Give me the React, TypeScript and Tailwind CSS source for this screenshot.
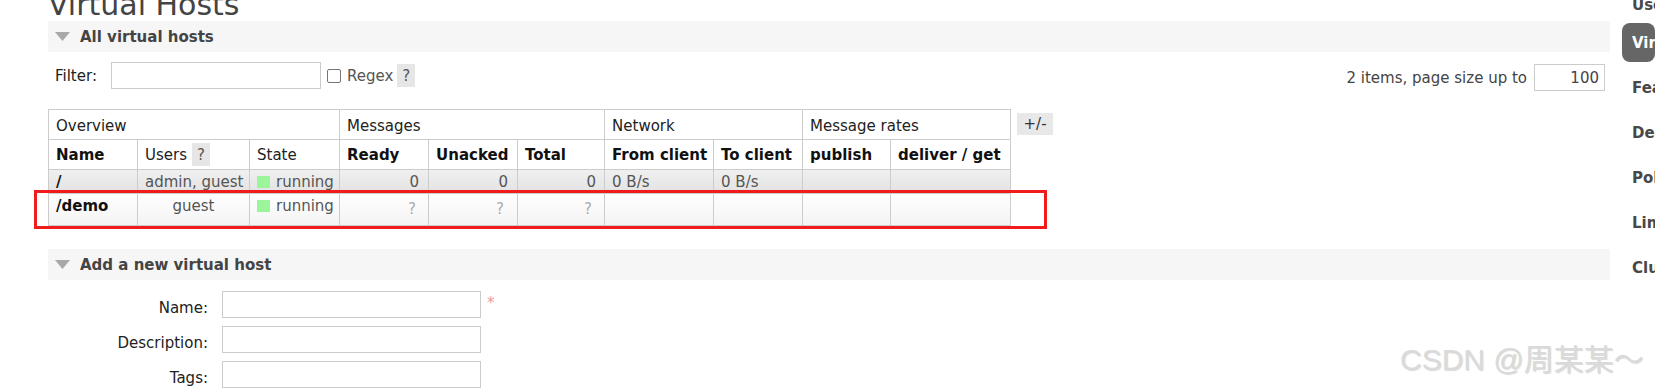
import React from "react";

const td = "border border-[#ccc] px-[7px] align-top";

function SectionHeader({ title }: { title: string }) {
  return (
    <div className="flex h-[31px] items-center bg-[#f6f6f6]">
      <svg width="15" height="9" viewBox="0 0 15 9" className="ml-[7px] mr-[10px]">
        <path d="M0 0H15L7.5 9Z" fill="#a8a8a8" />
      </svg>
      <span className="font-bold text-[#444]">{title}</span>
    </div>
  );
}

function Help() {
  return (
    <span className="inline-flex h-[23px] w-[18px] shrink-0 items-center justify-center bg-[#e6e6e6] text-[#555]">
      ?
    </span>
  );
}

function Running() {
  return (
    <div className="flex items-center">
      <span className="mr-[6px] h-[12px] w-[13px] shrink-0 bg-[#9bf59b]" />
      <span>running</span>
    </div>
  );
}

function FormRow({ label, required }: { label: string; required?: boolean }) {
  return (
    <div className="flex h-[27px] items-start">
      <span className="w-[160px] pt-[8px] text-right text-[#222]">{label}</span>
      <input className="ml-[14px] h-[27px] w-[259px] border border-[#ccc] bg-white" />
      {required && <span className="ml-[6px] pt-[3px] text-[#f29b9b]">*</span>}
    </div>
  );
}

export default function App() {
  const cols = [89, 112, 90, 89, 89, 87, 109, 89, 88, 120];
  const sideNav = ["Feature Flags", "Deprecated Features", "Policies", "Limits", "Cluster"];

  return (
    <div className="relative flex h-[390px] w-[1655px] overflow-hidden bg-white font-['DejaVu_Sans',sans-serif] text-[15px] leading-[18px] text-[#444]">
      <main className="ml-[48px] w-[1562px] shrink-0">
        <h1 className="-mt-[10px] h-[31px] text-[30px] leading-[30px] font-normal text-[#444]">
          Virtual Hosts
        </h1>

        <SectionHeader title="All virtual hosts" />

        {/* Filter + paging */}
        <div className="mt-[10px] flex h-[29px] justify-between">
          <div className="flex h-[27px] items-center self-start">
            <span className="ml-[7px] text-[#222]">Filter:</span>
            <input className="ml-[14px] h-[27px] w-[210px] border border-[#ccc] bg-white" />
            <span className="ml-[6px] h-[14px] w-[14px] rounded-[2px] border border-[#767676] bg-white" />
            <span className="ml-[6px] text-[#555]">Regex</span>
            <span className="ml-[4px]">
              <Help />
            </span>
          </div>
          <div className="flex h-[27px] items-center self-end">
            <span className="text-[#444]">2 items, page size up to</span>
            <input
              defaultValue="100"
              className="ml-[7px] mr-[5px] h-[27px] w-[71px] border border-[#ccc] bg-white pr-[5px] text-right text-[#444]"
            />
          </div>
        </div>

        {/* Vhost table */}
        <div className="mt-[18px] flex items-start">
          <table className="w-[962px] table-fixed border-collapse whitespace-nowrap">
            <colgroup>
              {cols.map((w, i) => (
                <col key={i} style={{ width: w }} />
              ))}
            </colgroup>
            <thead>
              <tr className="h-[30px] text-[#222]">
                <th colSpan={3} className={`${td} pt-[7px] text-left font-normal`}>Overview</th>
                <th colSpan={3} className={`${td} pt-[7px] text-left font-normal`}>Messages</th>
                <th colSpan={2} className={`${td} pt-[7px] text-left font-normal`}>Network</th>
                <th colSpan={2} className={`${td} pt-[7px] text-left font-normal`}>Message rates</th>
              </tr>
              <tr className="h-[30px] text-[#111]">
                <th className="border border-[#ccc] px-[7px] text-left align-middle font-bold">Name</th>
                <th className="border border-[#ccc] px-[7px] text-left align-middle font-normal text-[#222]">
                  <div className="flex items-center">
                    <span>Users</span>
                    <span className="ml-[5px]">
                      <Help />
                    </span>
                  </div>
                </th>
                <th className="border border-[#ccc] px-[7px] text-left align-middle font-normal text-[#222]">State</th>
                <th className="border border-[#ccc] px-[7px] text-left align-middle font-bold">Ready</th>
                <th className="border border-[#ccc] px-[7px] text-left align-middle font-bold">Unacked</th>
                <th className="border border-[#ccc] px-[7px] text-left align-middle font-bold">Total</th>
                <th className="border border-[#ccc] px-[7px] text-left align-middle font-bold">From client</th>
                <th className="border border-[#ccc] px-[7px] text-left align-middle font-bold">To client</th>
                <th className="border border-[#ccc] px-[7px] text-left align-middle font-bold">publish</th>
                <th className="border border-[#ccc] px-[7px] text-left align-middle font-bold">deliver / get</th>
              </tr>
            </thead>
            <tbody className="text-[#555]">
              <tr className="h-[24px] bg-[linear-gradient(#f0f0f0,#e2e2e2)]">
                <td className={`${td} pt-[3px] font-bold text-[#111]`}>/</td>
                <td className={`${td} pt-[3px] text-center`}>admin, guest</td>
                <td className={`${td} pt-[3px]`}>
                  <Running />
                </td>
                <td className={`${td} pr-[9px] pt-[3px] text-right`}>0</td>
                <td className={`${td} pr-[9px] pt-[3px] text-right`}>0</td>
                <td className={`${td} pr-[8px] pt-[3px] text-right`}>0</td>
                <td className={`${td} pt-[3px]`}>0 B/s</td>
                <td className={`${td} pt-[3px]`}>0 B/s</td>
                <td className={td} />
                <td className={td} />
              </tr>
              <tr className="h-[32px] bg-[linear-gradient(#ffffff,#f3f3f3)]">
                <td className={`${td} pt-[3px] font-bold text-[#111]`}>/demo</td>
                <td className={`${td} pt-[3px] text-center`}>guest</td>
                <td className={`${td} pt-[3px]`}>
                  <Running />
                </td>
                <td className={`${td} pr-[12px] pt-[6px] text-right text-[#aaa]`}>?</td>
                <td className={`${td} pr-[13px] pt-[6px] text-right text-[#aaa]`}>?</td>
                <td className={`${td} pr-[12px] pt-[6px] text-right text-[#aaa]`}>?</td>
                <td className={td} />
                <td className={td} />
                <td className={td} />
                <td className={td} />
              </tr>
            </tbody>
          </table>
          <span className="ml-[6px] mt-[4px] flex h-[22px] w-[36px] items-center justify-center bg-[#e8e8e8] text-[#333]">
            +/-
          </span>
        </div>

        <div className="mt-[23px]">
          <SectionHeader title="Add a new virtual host" />
        </div>

        <div className="mt-[11px] flex flex-col gap-[8px]">
          <FormRow label="Name:" required />
          <FormRow label="Description:" />
          <FormRow label="Tags:" />
        </div>
      </main>

      {/* Right-hand tab list */}
      <aside className="ml-[12px] flex-1 overflow-hidden whitespace-nowrap font-bold text-[#484848]">
        <div className="-mt-[4px] pl-[10px]">Users</div>
        <div className="mt-[9px] rounded-[8px] bg-[#666] pb-[10px] pl-[10px] pt-[11px] text-white">
          Virtual Hosts
        </div>
        {sideNav.map((label, i) => (
          <div key={label} className={`${i === 0 ? "mt-[17px]" : "mt-[27px]"} pl-[10px]`}>
            {label}
          </div>
        ))}
      </aside>

      {/* Highlight box drawn over the /demo row */}
      <div className="pointer-events-none absolute left-[34px] top-[190px] h-[39px] w-[1013px] border-[3px] border-[#f21b1b]" />

      {/* Watermark */}
      <div className="pointer-events-none absolute left-[1400px] top-[345px] whitespace-nowrap font-['Liberation_Sans','Noto_Sans_CJK_SC',sans-serif] text-[30px] leading-[30px] text-[#dadada] [text-shadow:1px_1px_1px_rgba(0,0,0,0.15)]">
        CSDN @周某某～
      </div>
    </div>
  );
}
